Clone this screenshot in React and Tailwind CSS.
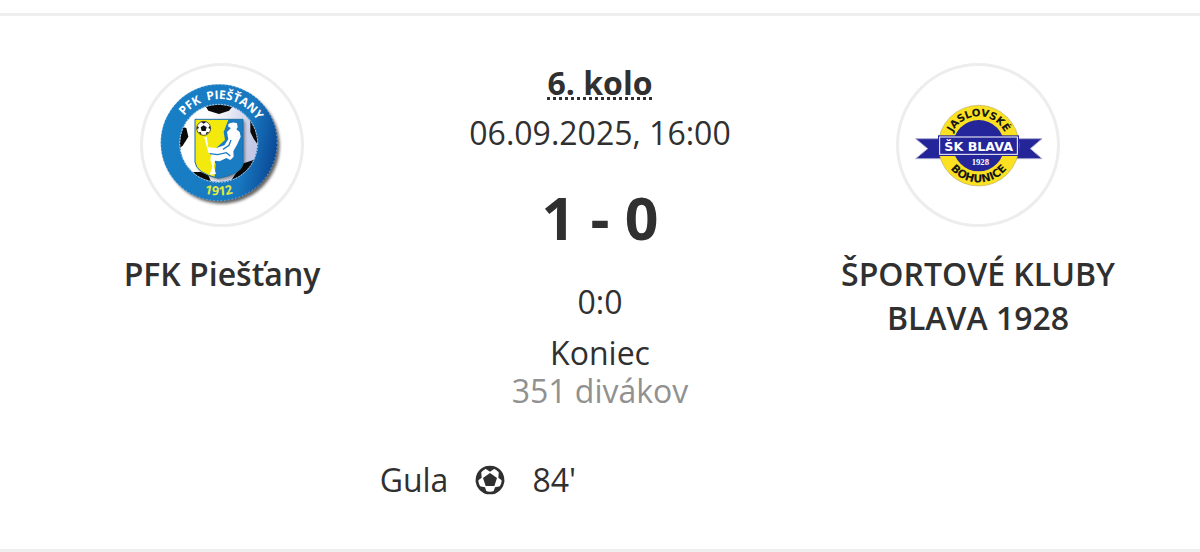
function HomeLogo() {
  return (
    <svg
      viewBox="26 24 474 474"
      className="w-full h-full"
      role="img"
      aria-label="PFK Piešťany"
    >
      <defs>
        <linearGradient id="homeRing" x1="0" x2="1" y1="0.3" y2="0.5">
          <stop offset="0" stopColor="#1880c6" />
          <stop offset="0.75" stopColor="#1878c0" />
          <stop offset="1" stopColor="#0b4a97" />
        </linearGradient>
        <linearGradient id="homeBall" x1="0" x2="1" y1="0" y2="0.2">
          <stop offset="0.4" stopColor="#ffffff" />
          <stop offset="1" stopColor="#c3c8e6" />
        </linearGradient>
        <clipPath id="homeBallClip">
          <circle cx="253" cy="256" r="116" />
        </clipPath>
        <clipPath id="homeShieldClip">
          <path d="M182 184H326V318Q320 348 252 361Q185 345 182 312Z" />
        </clipPath>
        <filter id="homeBlur" x="-10%" y="-10%" width="120%" height="120%">
          <feGaussianBlur stdDeviation="4" />
        </filter>
        <path id="homeTop" d="M121 256A133 133 0 0 1 387 256" />
        <path id="homeBottom" d="M95 254A158 158 0 0 0 411 254" />
      </defs>
      <circle cx="262" cy="263" r="174" fill="#000" opacity="0.6" filter="url(#homeBlur)" />
      <circle cx="254" cy="254" r="175" fill="url(#homeRing)" />
      <circle cx="254" cy="254" r="174" fill="none" stroke="#fff" strokeWidth="2" strokeDasharray="4 7" opacity="0.6" />
      <circle cx="253" cy="256" r="116" fill="url(#homeBall)" />
      <g clipPath="url(#homeBallClip)" fill="#0a0a0a">
        <path d="M208 136H302L284 158L254 168L222 158Z" />
        <path d="M130 204L156 210L162 236L146 262L130 276Z" />
        <path d="M348 180L376 204V268L358 242L348 222Z" />
        <path d="M160 342L200 342L222 352L234 380H190Z" />
        <path d="M282 380L306 344L328 316L364 304L350 348Z" />
      </g>
      <circle cx="253" cy="256" r="117" fill="none" stroke="#fff" strokeWidth="2" strokeDasharray="5 4" />
      <path d="M188 190H332V322Q326 354 258 367Q191 351 188 318Z" fill="#000" opacity="0.4" filter="url(#homeBlur)" />
      <g clipPath="url(#homeShieldClip)">
        <path d="M180 180H330V365H180Z" fill="#f3e90c" />
        <path d="M284 180H330V365H240L244 318L232 290L248 268L272 246L268 222Z" fill="#1a7cc2" />
        <path d="M282 198Q294 190 308 196L310 208L306 214L316 222L319 236L308 260L297 280L298 296L288 306L276 300L256 310L242 308L238 324L245 348L226 350L234 326L228 306L230 290L222 284L216 262L210 238L217 236L222 268L246 270L270 262L282 244L278 222L290 210L282 206Z" fill="#fff" />
        <path d="M226 287L250 290L276 284L288 294M290 246L284 262L266 274" stroke="#1a7cc2" strokeWidth="4" fill="none" />
      </g>
      <path d="M182 184H326V318Q320 348 252 361Q185 345 182 312Z" fill="none" stroke="#1a6fae" strokeWidth="3" />
      <circle cx="208" cy="211" r="21" fill="#fff" stroke="#111" strokeWidth="2" />
      <g fill="#111">
        <path d="M208 202L217 208L214 219H202L199 208Z" />
        <path d="M200 191H216L208 197Z" />
        <path d="M226 203L229 214L222 210Z" />
        <path d="M190 203L187 214L194 210Z" />
        <path d="M215 230L224 222L216 223Z" />
        <path d="M201 230L192 222L200 223Z" />
      </g>
      <text
        fill="#fff"
        fontSize="36"
        fontWeight="700"
        textAnchor="middle"
        className="font-['Open_Sans',sans-serif]"
      >
        <textPath href="#homeTop" startOffset="52%">
          PFK&#160; PIEŠŤANY
        </textPath>
      </text>
      <text
        fill="#e2ea3a"
        fontSize="38"
        fontWeight="700"
        textAnchor="middle"
        className="font-['Open_Sans',sans-serif]"
      >
        <textPath href="#homeBottom" startOffset="50%">
          1912
        </textPath>
      </text>
    </svg>
  );
}

function AwayLogo() {
  return (
    <svg
      viewBox="26 24 474 474"
      className="w-full h-full"
      role="img"
      aria-label="ŠK Blava 1928"
    >
      <defs>
        <path id="awayTop" d="M177 263A88 88 0 0 1 353 263" />
        <path id="awayBottom" d="M155 263A110 110 0 0 0 375 263" />
      </defs>
      <path
        d="M76 242H455L420 272L455 302H76L112 272Z"
        fill="#25259a"
        stroke="#a9a9cf"
        strokeWidth="3"
      />
      <circle cx="265" cy="263" r="121" fill="#fbe122" stroke="#b9ad62" strokeWidth="2" />
      <circle cx="265" cy="263" r="77" fill="#25259a" />
      <rect x="143" y="232" width="243" height="62" fill="#25259a" />
      <rect x="148" y="237" width="233" height="52" fill="none" stroke="#fff" strokeWidth="3" />
      <text
        x="265"
        y="278"
        fill="#fff"
        fontSize="38"
        fontWeight="700"
        textAnchor="middle"
        className="font-['DejaVu_Sans',sans-serif]"
      >
        ŠK BLAVA
      </text>
      <text
        x="270"
        y="320"
        fill="#fff"
        fontSize="26"
        fontWeight="700"
        textAnchor="middle"
        className="font-['Liberation_Serif',serif]"
      >
        1928
      </text>
      <g
        fill="#151515"
        fontWeight="700"
        textAnchor="middle"
        className="font-['DejaVu_Sans',sans-serif]"
      >
        <text fontSize="31">
          <textPath href="#awayTop" startOffset="50%">
            JASLOVSKÉ
          </textPath>
        </text>
        <text fontSize="33">
          <textPath href="#awayBottom" startOffset="50%">
            BOHUNICE
          </textPath>
        </text>
      </g>
    </svg>
  );
}

function BallIcon() {
  return (
    <svg viewBox="0 0 90 90" className="w-[30px] h-[30px]" role="img" aria-label="Gól">
      <circle cx="45" cy="45" r="39" fill="#fff" stroke="#303030" strokeWidth="8" />
      <g fill="#303030">
        <path d="M45 24L66 39L58 63H32L24 39Z" />
        <path d="M25 7Q45 0 65 7L45 20Z" />
        <path d="M72 14Q87 30 88 52L70 38Z" />
        <path d="M84 62Q72 80 53 88L60 67Z" />
        <path d="M6 62Q18 80 37 88L30 67Z" />
        <path d="M18 14Q3 30 2 52L20 38Z" />
      </g>
    </svg>
  );
}

function Team({ name, logo }) {
  return (
    <div className="flex flex-col items-center pt-0.5">
      <div className="w-[164px] h-[164px] border-3 border-[#ededed] rounded-full">
        {logo}
      </div>
      <p className="mt-[25px] font-semibold text-center">{name}</p>
    </div>
  );
}

const goals = [{ player: "Gula", minute: "84'" }];

export default function App() {
  return (
    <div className="pt-[13px] bg-white">
      <main className="px-[33px] pt-[45px] pb-[47px] border-y-3 border-[#eeeeee] font-['Open_Sans',sans-serif] text-[32px] leading-[44px] text-[#303030]">
        <div className="grid grid-cols-3">
          <Team name="PFK Piešťany" logo={<HomeLogo />} />
          <div className="flex flex-col items-center">
            <a
              href="#kolo"
              className="font-bold underline decoration-dotted decoration-3 underline-offset-2 [text-decoration-skip-ink:none]"
            >
              6. kolo
            </a>
            <p className="mt-1.5">06.09.2025, 16:00</p>
            <p className="mt-5 text-[59px] leading-[84px] font-bold">1 - 0</p>
            <p className="mt-[21px]">0:0</p>
            <p className="mt-2.5 leading-[38px]">Koniec</p>
            <p className="leading-[38px] text-[#919191]">351 divákov</p>
          </div>
          <Team name="ŠPORTOVÉ KLUBY BLAVA 1928" logo={<AwayLogo />} />
        </div>
        <ul className="grid grid-cols-2 mt-12">
          {goals.map((g) => (
            <li
              key={g.player}
              className="flex items-center justify-end gap-[27px] pr-6"
            >
              <span>{g.player}</span>
              <BallIcon />
              <span>{g.minute}</span>
            </li>
          ))}
        </ul>
      </main>
    </div>
  );
}
